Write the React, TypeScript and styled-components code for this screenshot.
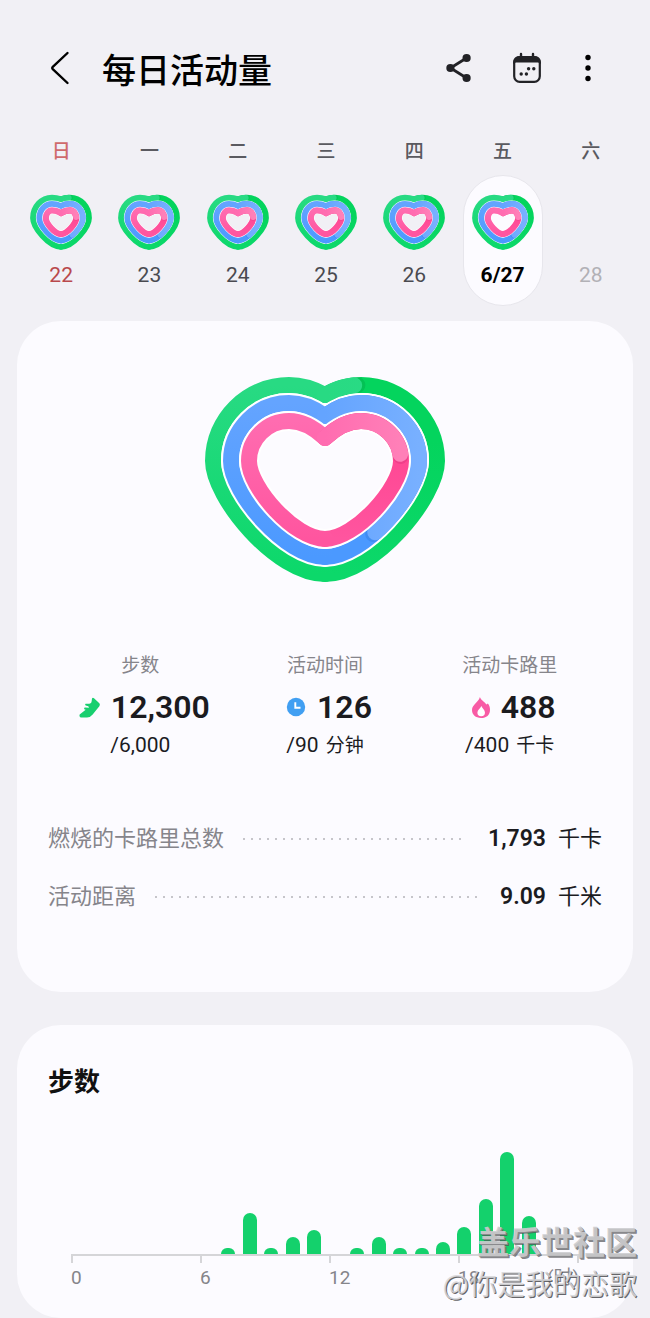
import React, { useId } from 'react';
import styled, { createGlobalStyle } from 'styled-components';

const GlobalStyle = createGlobalStyle`
  *, *::before, *::after { box-sizing: border-box; }
  body {
    margin: 0;
    background: #f1f0f5;
    color: #1b1b1f;
    font-family: Roboto, 'Noto Sans CJK SC', sans-serif;
  }
  h1, h2, p, dl, dt, dd, ol, ul { margin: 0; padding: 0; }
  button { border: 0; padding: 0; background: none; font: inherit; color: inherit; cursor: pointer; }
`;

/* ---------- activity heart ---------- */

interface RingShape {
  left: number;
  leftY: number;
  top: number;
  lobe: number;
  notch: number;
  bottom: number;
  side: number;
  base: number;
}

interface RingTone {
  base: [string, string];
  tail: [string, string];
  head: [string, string];
  shade: string;
  progress: number;
}

interface HeartSpec {
  width: number;
  height: number;
  stroke: number;
  gap: number;
  rings: RingShape[];
}

const TONES: RingTone[] = [
  { base: ['#28da83', '#0cd86a'], tail: ['#04d45d', '#0cd86a'], head: ['#28da83', '#2bdb86'], shade: '#03a848', progress: 9.5 },
  { base: ['#64a4ff', '#4b99ff'], tail: ['#4b99ff', '#4b99ff'], head: ['#64a4ff', '#78b0ff'], shade: '#2f78dd', progress: 79 },
  { base: ['#ff6cb0', '#ff559f'], tail: ['#ff4894', '#ff559f'], head: ['#ff6cb0', '#ff80b8'], shade: '#d9347a', progress: 44 },
];

const LARGE: HeartSpec = {
  width: 240,
  height: 206,
  stroke: 16,
  gap: 2,
  rings: [
    { left: 8, leftY: 84, top: 8, lobe: 36, notch: 18, bottom: 197, side: 0.32, base: 0.44 },
    { left: 26, leftY: 84, top: 26, lobe: 36, notch: 39, bottom: 180, side: 0.33, base: 0.42 },
    { left: 44, leftY: 84, top: 44, lobe: 36, notch: 61, bottom: 162, side: 0.34, base: 0.4 },
  ],
};

const SMALL: HeartSpec = {
  width: 62,
  height: 56,
  stroke: 6.2,
  gap: 0.5,
  rings: [
    { left: 3.2, leftY: 24, top: 3.8, lobe: 9, notch: 5.4, bottom: 52.6, side: 0.32, base: 0.44 },
    { left: 9.5, leftY: 24, top: 10.1, lobe: 9, notch: 12.2, bottom: 46.3, side: 0.33, base: 0.42 },
    { left: 15.8, leftY: 24, top: 16.4, lobe: 9, notch: 19, bottom: 40, side: 0.34, base: 0.4 },
  ],
};

function halfRing(r: RingShape, width: number, side: 1 | -1) {
  const cx = width / 2;
  const x = (d: number) => cx + side * d;
  const reach = cx - r.left;
  const k = 0.55;
  return [
    `M${cx} ${r.notch}`,
    `C${x(r.lobe * 0.35)} ${r.notch - (r.notch - r.top) * 0.7} ${x(r.lobe * 0.65)} ${r.top} ${x(r.lobe)} ${r.top}`,
    `C${x(r.lobe + (reach - r.lobe) * k)} ${r.top} ${x(reach)} ${r.leftY - (r.leftY - r.top) * k} ${x(reach)} ${r.leftY}`,
    `C${x(reach)} ${r.leftY + (r.bottom - r.leftY) * r.side} ${x(reach * r.base)} ${r.bottom} ${cx} ${r.bottom}`,
  ].join(' ');
}

function ActivityHeart({ spec, title }: { spec: HeartSpec; title: string }) {
  const id = useId().replace(/[^a-zA-Z0-9]/g, '');
  const { width, height, stroke, gap } = spec;
  return (
    <svg width={width} height={height} viewBox={`0 0 ${width} ${height}`} role="img" aria-label={title} fill="none">
      {spec.rings.map((r, i) => {
        const tone = TONES[i];
        const right = halfRing(r, width, 1);
        const left = halfRing(r, width, -1);
        const key = `${id}r${i}`;
        const ramp = { gradientUnits: 'userSpaceOnUse' as const, x1: 0, x2: 0, y1: r.top, y2: r.bottom };
        return (
          <g key={key} strokeWidth={stroke} strokeLinejoin="round">
            <defs>
              <linearGradient id={`${key}b`} {...ramp}>
                <stop offset="0" stopColor={tone.base[0]} />
                <stop offset="1" stopColor={tone.base[1]} />
              </linearGradient>
              <linearGradient id={`${key}t`} {...ramp}>
                <stop offset="0.3" stopColor={tone.tail[0]} />
                <stop offset="1" stopColor={tone.tail[1]} />
              </linearGradient>
              <linearGradient id={`${key}h`} gradientUnits="userSpaceOnUse" x1={width / 2} x2={width - r.left} y1="0" y2="0">
                <stop offset="0" stopColor={tone.head[0]} />
                <stop offset="1" stopColor={tone.head[1]} />
              </linearGradient>
              <mask id={`${key}m`} maskUnits="userSpaceOnUse" x="0" y="0" width={width} height={height}>
                <path d={right} stroke="#fff" strokeWidth={stroke} />
              </mask>
            </defs>
            {i > 0 && (
              <g stroke="#fff" strokeWidth={stroke + gap * 2} strokeLinecap="round">
                <path d={right} />
                <path d={left} />
              </g>
            )}
            <path d={right} stroke={`url(#${key}t)`} strokeLinecap="round" />
            <path d={left} stroke={`url(#${key}b)`} strokeLinecap="round" />
            <path
              d={right}
              pathLength={100}
              stroke={tone.shade}
              strokeOpacity="0.4"
              strokeLinecap="round"
              strokeDasharray={`${tone.progress + 1} 200`}
              mask={`url(#${key}m)`}
            />
            <path
              d={right}
              pathLength={100}
              stroke={`url(#${key}h)`}
              strokeLinecap="round"
              strokeDasharray={`${tone.progress} 200`}
            />
          </g>
        );
      })}
    </svg>
  );
}

/* ---------- header ---------- */

const Page = styled.main`
  position: relative;
  width: 100%;
  overflow: hidden;
`;

const Header = styled.header`
  display: flex;
  align-items: center;
  padding: 45px 52px 0 44px;
`;

const Title = styled.h1`
  flex: 1;
  margin: 6px 0 0 26px;
  font-size: 34px;
  line-height: 40px;
  font-weight: 500;
  color: #000;
`;

const Actions = styled.div`
  display: flex;
  gap: 36px;
`;

const IconButton = styled.button`
  display: flex;
`;

/* ---------- week strip ---------- */

const Week = styled.ol`
  display: grid;
  grid-template-columns: repeat(7, 1fr);
  padding: 0 15px 0 17px;
  margin-top: 49px;
  list-style: none;
`;

const Day = styled.li`
  display: flex;
  flex-direction: column;
  align-items: center;
`;

type DayTone = 'normal' | 'sunday' | 'future' | 'selected';

const Weekday = styled.span<{ $sunday: boolean }>`
  font-size: 19px;
  line-height: 24px;
  font-weight: 500;
  color: ${(p) => (p.$sunday ? '#cf6a6c' : '#5a5a60')};
`;

const dateColors: Record<DayTone, string> = {
  normal: '#4a4a50',
  sunday: '#b9494c',
  future: '#b2b1b6',
  selected: '#000',
};

const DayButton = styled.button<{ $tone: DayTone }>`
  display: flex;
  flex-direction: column;
  align-items: center;
  justify-content: flex-end;
  gap: 13px;
  width: 80px;
  height: 131px;
  margin-top: 11px;
  padding-bottom: 18px;
  border: 1px solid ${(p) => (p.$tone === 'selected' ? '#e7e6ec' : 'transparent')};
  border-radius: 40px;
  background: ${(p) => (p.$tone === 'selected' ? '#fcfbff' : 'transparent')};
  color: ${(p) => dateColors[p.$tone]};
  font-size: 21px;
  line-height: 24px;
  font-weight: ${(p) => (p.$tone === 'selected' ? 700 : 400)};
`;

/* ---------- cards ---------- */

const Card = styled.section`
  margin: 0 17px;
  border-radius: 44px;
  background: #fcfbff;
`;

const SummaryCard = styled(Card)`
  margin-top: 15px;
  padding: 56px 31px 79px;
`;

const HeartBox = styled.div`
  display: flex;
  justify-content: center;
`;

const Stats = styled.dl`
  display: grid;
  grid-template-columns: repeat(3, 1fr);
  margin-top: 69px;
`;

const Stat = styled.div`
  display: flex;
  flex-direction: column;
  align-items: center;
`;

const StatLabel = styled.dt`
  font-size: 19px;
  line-height: 28px;
  color: #86858b;
`;

const StatValue = styled.dd`
  display: flex;
  align-items: center;
  gap: 11px;
  margin-top: 7px;
  padding-left: 8px;
  font-size: 32px;
  line-height: 40px;
  font-weight: 600;
`;

const StatGoal = styled.dd`
  margin-top: 4px;
  font-size: 21px;
  line-height: 28px;
`;

const Unit = styled.span`
  margin-left: 7px;
  font-size: 19px;
`;

const Totals = styled.dl`
  display: flex;
  flex-direction: column;
  gap: 26px;
  margin-top: 63px;
`;

const Total = styled.div`
  display: flex;
  align-items: center;
  line-height: 32px;
`;

const TotalLabel = styled.dt`
  font-size: 22px;
  color: #86858b;
`;

const Leader = styled.span`
  flex: 1;
  height: 2px;
  margin: 0 21px 0 16px;
  background: radial-gradient(circle at 4px 1px, #c6c5ca 1px, transparent 1px) 0 0 / 8px 2px repeat-x;
`;

const TotalValue = styled.dd`
  display: flex;
  align-items: center;
  gap: 12px;
  font-size: 22px;
`;

const Figure = styled.strong`
  font-size: 23px;
  font-weight: 600;
`;

/* ---------- hourly chart ---------- */

const ChartCard = styled(Card)`
  margin-top: 33px;
  padding: 39px 54px 27px;
`;

const ChartTitle = styled.h2`
  margin-left: -23px;
  font-size: 26px;
  line-height: 36px;
  font-weight: 600;
  color: #111;
`;

const Bars = styled.div`
  display: flex;
  align-items: flex-end;
  justify-content: space-between;
  height: 154px;
`;

const Bar = styled.span`
  width: 14px;
  border-radius: 7px 7px 0 0;
  background: #14d16c;
`;

const Axis = styled.div`
  display: grid;
  grid-template-columns: 129fr 129fr 129fr 121fr;
  border-top: 2px solid #d5d5d8;
`;

const Tick = styled.div`
  height: 7px;
  border-left: 2px solid #d5d5d8;
  &:last-child { border-right: 2px solid #d5d5d8; }
`;

const Hours = styled.div`
  display: grid;
  grid-template-columns: 129fr 129fr 129fr 121fr;
  padding-top: 2px;
  font-size: 19px;
  line-height: 26px;
  color: #85858a;
`;

const Hour = styled.span`
  display: flex;
  justify-content: space-between;
`;

/* ---------- watermark ---------- */

const Watermark = styled.div`
  position: absolute;
  right: 13px;
  bottom: 14px;
  display: flex;
  flex-direction: column;
  align-items: flex-end;
  pointer-events: none;
  font-family: 'Noto Sans CJK SC', sans-serif;
  white-space: nowrap;
`;

const Community = styled.strong`
  font-size: 32px;
  line-height: 44px;
  font-weight: 700;
  color: rgba(205, 205, 207, 0.9);
  text-shadow: 1px 1px 0 #8a8a8d, 2px 2px 0 rgba(80, 80, 84, 0.7);
`;

const Author = styled.span`
  font-size: 28px;
  line-height: 42px;
  color: rgba(215, 215, 218, 0.85);
  text-shadow: 1px 1px 0 rgba(80, 80, 84, 0.9);
`;

/* ---------- icons ---------- */

const BackIcon = () => (
  <svg width="32" height="40" viewBox="0 0 32 40" fill="none" stroke="#000" strokeWidth="2.4" strokeLinecap="round" strokeLinejoin="round">
    <path d="M23.5 5 8.500 19.200Q7.800 20 8.500 20.800L23.500 35" />
  </svg>
);

const ShareIcon = () => (
  <svg width="32" height="40" viewBox="0 0 32 40" fill="#222226">
    <path d="M24.5 10 8.500 20l16 10" fill="none" stroke="#222226" strokeWidth="2.8" />
    <circle cx="24.6" cy="10" r="4.1" />
    <circle cx="8.4" cy="20" r="4.1" />
    <circle cx="24.6" cy="30" r="4.1" />
  </svg>
);

const CalendarIcon = () => (
  <svg width="32" height="40" viewBox="0 0 32 40" fill="#222226">
    <rect x="4.2" y="9.2" width="25.6" height="24.6" rx="5.5" fill="none" stroke="#222226" strokeWidth="2.2" />
    <path d="M3.1 16V14a6 6 0 0 1 6-6h15.800a6 6 0 0 1 6 6v2q-1-1.500-3-1.500H6.100q-2 0-3 1.500z" />
    <path d="M11 6v4M23 6v4" stroke="#222226" strokeWidth="2.4" strokeLinecap="round" />
    <circle cx="18.6" cy="20.7" r="1.7" />
    <circle cx="23.8" cy="20.7" r="1.7" />
    <circle cx="11.2" cy="26" r="1.7" />
    <circle cx="16.4" cy="26" r="1.7" />
  </svg>
);

const MoreIcon = () => (
  <svg width="20" height="40" viewBox="0 0 20 40" fill="#000">
    <circle cx="10" cy="9.5" r="2.7" />
    <circle cx="10" cy="20" r="2.7" />
    <circle cx="10" cy="30.5" r="2.7" />
  </svg>
);

const ShoeIcon = () => (
  <svg width="21" height="21" viewBox="0 0 63 62">
    <path
      fill="#18cf6f"
      d="M2 52 20 38 16 36Q14 32 18 31L30 32 28 27 20 25Q17 22 20 20L31 20Q38 18 38 12L39 4Q41 0 45 3L61 18Q64 22 61 27L41 52Q34 61 24 61L5 61Q0 59 2 52Z"
    />
  </svg>
);

const ClockIcon = () => (
  <svg width="20" height="20" viewBox="0 0 20 20">
    <circle cx="10" cy="10" r="9.2" fill="#419ff2" />
    <path d="M9.3 5.2v5.500h5.200" fill="none" stroke="#fff" strokeWidth="1.9" />
  </svg>
);

const FlameIcon = () => (
  <svg width="18" height="21" viewBox="0 0 50 58">
    <path fill="#f85ba5" d="M22 0C24 8 35 13 40 21L44 18C49 24 50 30 50 35C50 50 40 58 25 58 10 58 0 49 0 36 0 21 18 15 22 0Z" />
    <path fill="#fff" d="M26 25C29 32 36 36 36 43A10.500 10.500 0 0 1 15 43C15 36 23 32 26 25Z" />
  </svg>
);

/* ---------- data ---------- */

const days: { weekday: string; date: string; tone: DayTone }[] = [
  { weekday: '日', date: '22', tone: 'sunday' },
  { weekday: '一', date: '23', tone: 'normal' },
  { weekday: '二', date: '24', tone: 'normal' },
  { weekday: '三', date: '25', tone: 'normal' },
  { weekday: '四', date: '26', tone: 'normal' },
  { weekday: '五', date: '6/27', tone: 'selected' },
  { weekday: '六', date: '28', tone: 'future' },
];

const stats = [
  { label: '步数', icon: <ShoeIcon />, value: '12,300', goal: '/6,000', unit: '' },
  { label: '活动时间', icon: <ClockIcon />, value: '126', goal: '/90', unit: '分钟' },
  { label: '活动卡路里', icon: <FlameIcon />, value: '488', goal: '/400', unit: '千卡' },
];

const totals = [
  { label: '燃烧的卡路里总数', value: '1,793', unit: '千卡' },
  { label: '活动距离', value: '9.09', unit: '千米' },
];

const hourly = [0, 0, 0, 0, 0, 0, 0, 6, 41, 6, 17, 24, 0, 6, 17, 6, 6, 12, 27, 55, 102, 38, 0, 0];

export default function App() {
  return (
    <Page>
      <GlobalStyle />
      <Header>
        <IconButton aria-label="返回"><BackIcon /></IconButton>
        <Title>每日活动量</Title>
        <Actions>
          <IconButton aria-label="分享"><ShareIcon /></IconButton>
          <IconButton aria-label="日历"><CalendarIcon /></IconButton>
          <IconButton aria-label="更多"><MoreIcon /></IconButton>
        </Actions>
      </Header>

      <Week>
        {days.map((d) => (
          <Day key={d.date}>
            <Weekday $sunday={d.tone === 'sunday'}>{d.weekday}</Weekday>
            <DayButton $tone={d.tone}>
              {d.tone !== 'future' && <ActivityHeart spec={SMALL} title="活动量" />}
              <span>{d.date}</span>
            </DayButton>
          </Day>
        ))}
      </Week>

      <SummaryCard>
        <HeartBox><ActivityHeart spec={LARGE} title="每日活动量" /></HeartBox>
        <Stats>
          {stats.map((s) => (
            <Stat key={s.label}>
              <StatLabel>{s.label}</StatLabel>
              <StatValue>{s.icon}{s.value}</StatValue>
              <StatGoal>{s.goal}{s.unit && <Unit>{s.unit}</Unit>}</StatGoal>
            </Stat>
          ))}
        </Stats>
        <Totals>
          {totals.map((t) => (
            <Total key={t.label}>
              <TotalLabel>{t.label}</TotalLabel>
              <Leader />
              <TotalValue><Figure>{t.value}</Figure>{t.unit}</TotalValue>
            </Total>
          ))}
        </Totals>
      </SummaryCard>

      <ChartCard>
        <ChartTitle>步数</ChartTitle>
        <Bars>
          {hourly.map((h, i) => <Bar key={i} style={{ height: h }} />)}
        </Bars>
        <Axis><Tick /><Tick /><Tick /><Tick /></Axis>
        <Hours>
          <Hour>0</Hour>
          <Hour>6</Hour>
          <Hour>12</Hour>
          <Hour><span>18</span><span>(时)</span></Hour>
        </Hours>
      </ChartCard>

      <Watermark>
        <Community>盖乐世社区</Community>
        <Author>@你是我的恋歌</Author>
      </Watermark>
    </Page>
  );
}
